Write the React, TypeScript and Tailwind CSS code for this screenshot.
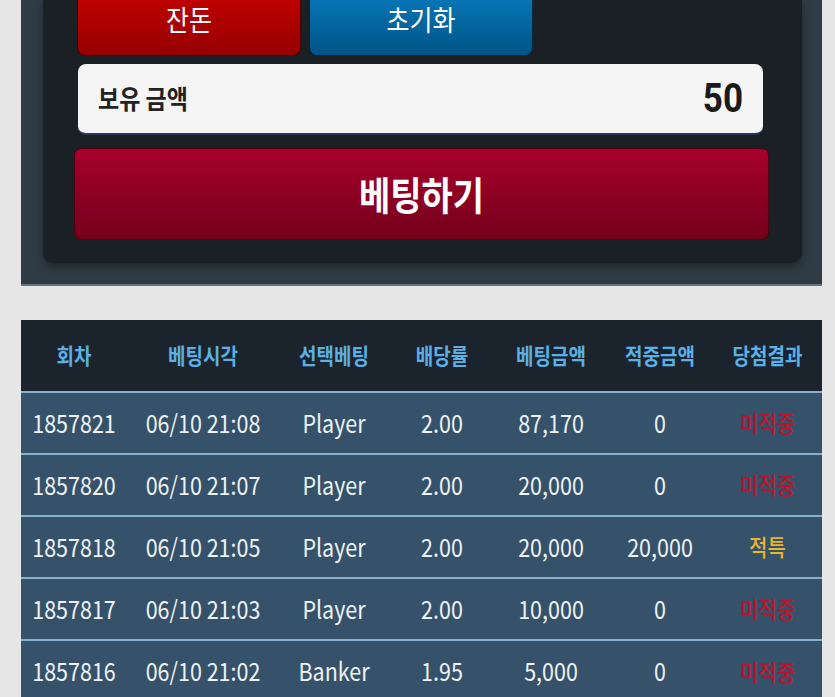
import React from "react";

type Row = {
  round: string;
  time: string;
  pick: string;
  odds: string;
  bet: string;
  win: string;
  result: string;
};

const rows: Row[] = [
  { round: "1857821", time: "06/10 21:08", pick: "Player", odds: "2.00", bet: "87,170", win: "0", result: "미적중" },
  { round: "1857820", time: "06/10 21:07", pick: "Player", odds: "2.00", bet: "20,000", win: "0", result: "미적중" },
  { round: "1857818", time: "06/10 21:05", pick: "Player", odds: "2.00", bet: "20,000", win: "20,000", result: "적특" },
  { round: "1857817", time: "06/10 21:03", pick: "Player", odds: "2.00", bet: "10,000", win: "0", result: "미적중" },
  { round: "1857816", time: "06/10 21:02", pick: "Banker", odds: "1.95", bet: "5,000", win: "0", result: "미적중" },
];

const headers = ["회차", "베팅시각", "선택베팅", "배당률", "베팅금액", "적중금액", "당첨결과"];

// the site's text renders a little taller than it is wide
const Tall = ({ children }: { children: React.ReactNode }) => (
  <span className="inline-block scale-y-[1.15]">{children}</span>
);

const App = () => {
  return (
    <div className="min-h-[697px] bg-[#e6e6e6] overflow-hidden font-['Noto_Sans_CJK_KR',sans-serif]">
      {/* bet panel (page is scrolled, top is cut off) */}
      <div className="ml-[21px] w-[801px] bg-[#2f3b45] border-b-2 border-[#66747f] pl-[22px] pr-[20px] pb-[21px]">
        <div className="bg-[#1b2025] rounded-b-[10px] shadow-[0_4px_8px_rgba(0,0,0,0.35)] pl-[31px] pr-[33px] pb-[23px]">
          <div className="flex gap-[8px] pl-[3px]">
            <button className="w-[224px] h-[56px] pb-[18px] rounded-b-[8px] bg-gradient-to-b from-[#bd0000] to-[#960000] border border-t-0 border-[#3a0000] text-white text-[25px] leading-none">
              <Tall>잔돈</Tall>
            </button>
            <button className="w-[224px] h-[56px] pb-[18px] rounded-b-[8px] bg-gradient-to-b from-[#0874b5] to-[#005485] border border-t-0 border-[#00263e] text-white text-[25px] leading-none">
              <Tall>초기화</Tall>
            </button>
          </div>
          <div className="mt-[8px] ml-[4px] mr-[6px] h-[71px] rounded-[8px] bg-[#f5f5f5] border-b-2 border-[#2a3560] flex items-center justify-between pl-[20px] pr-[20px]">
            <span className="text-[23px] font-bold text-[#222] leading-none">
              <Tall>보유 금액</Tall>
            </span>
            <span className="text-[35px] font-bold text-[#1a1a1a] font-['Roboto',sans-serif] leading-none">
              <Tall>50</Tall>
            </span>
          </div>
          <button className="mt-[13px] w-full h-[92px] rounded-[7px] bg-gradient-to-b from-[#a8002a] to-[#74001b] border border-[#4a0010] text-white text-[34px] font-bold leading-none">
            <Tall>베팅하기</Tall>
          </button>
        </div>
      </div>

      {/* history table */}
      <div className="ml-[21px] w-[801px] mt-[34px]">
        <table className="w-full table-fixed border-collapse">
          <colgroup>
            <col className="w-[106px]" />
            <col className="w-[152px]" />
            <col className="w-[110px]" />
            <col className="w-[106px]" />
            <col className="w-[112px]" />
            <col className="w-[106px]" />
            <col className="w-[109px]" />
          </colgroup>
          <thead className="bg-[#1b242c]">
            <tr className="h-[72px]">
              {headers.map((h) => (
                <th key={h} className="text-[19px] font-bold text-[#5bb0e6] text-center">
                  <Tall>{h}</Tall>
                </th>
              ))}
            </tr>
          </thead>
          <tbody className="bg-[#36526a]">
            {rows.map((r) => (
              <tr key={r.round} className="h-[62px] border-t-2 border-[#86b2d2] text-[#eef2f5] text-[21.5px] text-center">
                <td><Tall>{r.round}</Tall></td>
                <td><Tall>{r.time}</Tall></td>
                <td><Tall>{r.pick}</Tall></td>
                <td><Tall>{r.odds}</Tall></td>
                <td><Tall>{r.bet}</Tall></td>
                <td><Tall>{r.win}</Tall></td>
                <td
                  className={
                    r.result === "적특"
                      ? "text-[20px] font-medium text-[#e9b52e]"
                      : "text-[20px] font-medium text-[#bf132b]"
                  }
                >
                  <Tall>{r.result}</Tall>
                </td>
              </tr>
            ))}
          </tbody>
        </table>
      </div>
    </div>
  );
};

export default App;
